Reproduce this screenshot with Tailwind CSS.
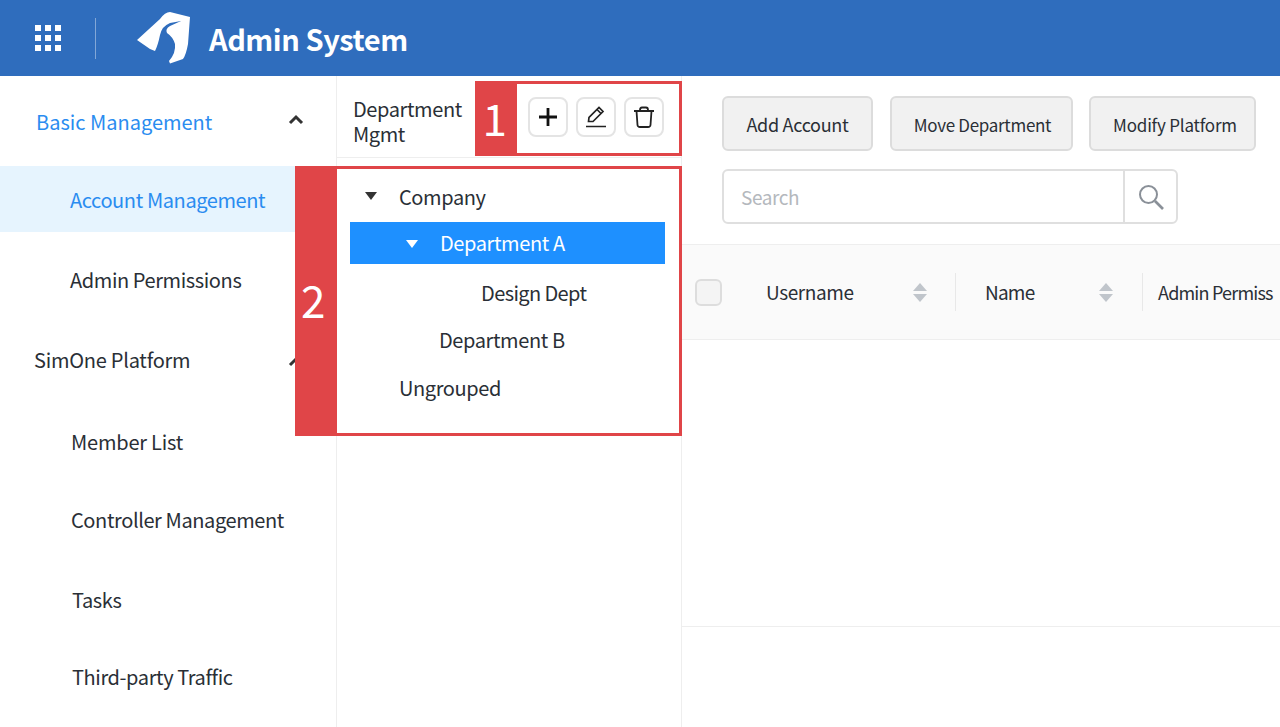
<!DOCTYPE html>
<html lang="en">
<head>
    <meta charset="UTF-8">
    <title>Admin System</title>
    <script src="https://cdn.jsdelivr.net/npm/@tailwindcss/browser@4"></script>
</head>
<body class="h-[727px] overflow-hidden bg-white font-['Noto_Sans_CJK_SC','Noto_Sans',sans-serif] text-[20px] tracking-[-0.4px] text-[#2a2f36]">
    <header class="flex h-[76px] items-center bg-[#2f6dbd]">
        <div class="ml-[35px] grid w-[26px] grid-cols-3 gap-[4px]">
            <i class="size-[6px] bg-white"></i><i class="size-[6px] bg-white"></i><i class="size-[6px] bg-white"></i>
            <i class="size-[6px] bg-white"></i><i class="size-[6px] bg-white"></i><i class="size-[6px] bg-white"></i>
            <i class="size-[6px] bg-white"></i><i class="size-[6px] bg-white"></i><i class="size-[6px] bg-white"></i>
        </div>
        <div class="ml-[34px] h-[41px] w-px bg-white/40"></div>
        <svg class="ml-[40px] shrink-0" width="56" height="54" viewBox="136 12 56 54">
            <path fill="#fff" d="M137 41 L160 20 Q165 13 170 13 L190 18 L188 45 Q186 56 183 60 L170 64.500 L169 62 Q176 54 175 45 Q173 38 167 34 Q165 30 170 27 L181 22 L170 24 Q162 27 160 36 Q158 46 155 52 L150 50 Z"/>
        </svg>
        <h1 class="ml-[17px] text-[29px] font-bold leading-none tracking-[-0.45px] text-white">Admin System</h1>
    </header>

    <div class="flex h-[651px]">
        <!-- sidebar -->
        <nav class="w-[337px] shrink-0 border-r border-[#eeeeee]">
            <div class="flex h-[90px] items-center justify-between pl-[36px] pr-[32px] pt-[1px] tracking-normal text-[#2a8cf0]">
                <span>Basic Management</span>
                <svg class="mb-[4px]" width="16" height="11" viewBox="0 0 16 11"><path d="M2 9 L8 3 L14 9" fill="none" stroke="#333" stroke-width="3"/></svg>
            </div>
            <div class="flex h-[66px] items-center bg-[#e6f4fe] pl-[70px] pt-[2px] text-[#2a8cf0]">Account Management</div>
            <div class="mt-[15px] flex h-[66px] items-center pl-[70px]">Admin Permissions</div>
            <div class="mt-[14px] flex h-[66px] items-center justify-between pl-[34px] pr-[32px] tracking-[-0.25px]">
                <span>SimOne Platform</span>
                <svg class="mt-[3px]" width="16" height="11" viewBox="0 0 16 11"><path d="M2 9 L8 3 L14 9" fill="none" stroke="#333" stroke-width="3"/></svg>
            </div>
            <div class="mt-[16px] flex h-[66px] items-center pl-[71px] tracking-[-0.2px]">Member List</div>
            <div class="mt-[12px] flex h-[66px] items-center pl-[71px]">Controller Management</div>
            <div class="mt-[14px] flex h-[66px] items-center pl-[72px]">Tasks</div>
            <div class="mt-[11px] flex h-[66px] items-center pl-[72px]">Third-party Traffic</div>
        </nav>

        <!-- department tree -->
        <section class="w-[345px] shrink-0 border-r border-[#eeeeee]">
            <div class="flex h-[82px] items-center justify-between border-b border-[#eeeeee] pl-[16px] pr-[17px] pt-[8px]">
                <div class="leading-[25px]">Department<br>Mgmt</div>
                <div class="-mt-[8px] flex gap-2">
                    <button class="flex size-10 items-center justify-center rounded-lg border-2 border-[#e4e4e4]">
                        <svg width="20" height="20" viewBox="0 0 20 20"><path d="M10 1 V19 M1 10 H19" stroke="#111" stroke-width="2.800"/></svg>
                    </button>
                    <button class="flex size-10 items-center justify-center rounded-lg border-2 border-[#e4e4e4]">
                        <svg width="24" height="24" viewBox="0 0 24 24"><path d="M4.500 16.500 L5 12.500 L15 2.500 L19 6.500 L9 16.500 Z M13 4.500 L17 8.500 M2 21.500 H22" fill="none" stroke="#222" stroke-width="1.700"/></svg>
                    </button>
                    <button class="flex size-10 items-center justify-center rounded-lg border-2 border-[#e4e4e4]">
                        <svg width="24" height="24" viewBox="0 0 24 24"><path d="M2 6 H22 M8 5 Q8 2.500 10 2.500 H14 Q16 2.500 16 5 M4.500 6 L5.500 20 Q5.700 22 8 22 H16 Q18.300 22 18.500 20 L19.500 6" fill="none" stroke="#222" stroke-width="1.800" stroke-linejoin="round"/></svg>
                    </button>
                </div>
            </div>
            <div class="relative">
                <div class="flex h-[40px] items-center pl-[62px] pt-[37px]">Company</div>
                <div class="ml-[13px] mt-[24px] flex h-[42px] w-[315px] items-center bg-[#1e90ff] pl-[90px] text-white">Department A</div>
                <div class="mt-[9px] flex h-[40px] items-center pl-[144px] tracking-[-0.6px]">Design Dept</div>
                <div class="mt-[7px] flex h-[40px] items-center pl-[102px]">Department B</div>
                <div class="mt-[8px] flex h-[40px] items-center pl-[62px]">Ungrouped</div>
                <i class="absolute left-[28px] top-[34px] border-x-[6px] border-t-[8px] border-x-transparent border-t-[#333]"></i>
                <i class="absolute left-[69px] top-[82px] border-x-[6px] border-t-[8px] border-x-transparent border-t-white"></i>
            </div>
        </section>

        <!-- account list -->
        <main class="min-w-0 flex-1">
            <div class="flex gap-[17px] pl-[40px] pt-[20px] text-[17px] tracking-[-0.2px]">
                <button class="h-[55px] w-[151px] rounded-md border-2 border-[#dcdcdc] bg-[#f1f1f1] pt-[2px] text-[18px] tracking-[-0.3px]">Add Account</button>
                <button class="h-[55px] w-[183px] rounded-md border-2 border-[#dcdcdc] bg-[#f1f1f1] pl-[2px] pt-[2px] tracking-[-0.3px]">Move Department</button>
                <button class="-ml-px h-[55px] w-[167px] rounded-md border-2 border-[#dcdcdc] bg-[#f1f1f1] pl-[5px] pt-[2px]">Modify Platform</button>
            </div>
            <div class="ml-[40px] mt-[18px] flex h-[55px] w-[456px] items-center rounded-md border-2 border-[#dfdfdf]">
                <span class="flex-1 pl-[17px] pt-[1px] text-[19px] text-[#b4b8bd]">Search</span>
                <span class="flex h-full w-[53px] items-center justify-center border-l-2 border-[#dfdfdf]">
                    <svg width="28" height="28" viewBox="0 0 28 28"><circle cx="11.500" cy="11.500" r="8.500" fill="none" stroke="#8a9098" stroke-width="2"/><path d="M18 18 L26 26" stroke="#8a9098" stroke-width="2.600"/></svg>
                </span>
            </div>
            <div class="mt-[20px] flex h-[96px] items-center overflow-hidden border-y border-[#eeeeee] bg-[#fafafa] whitespace-nowrap">
                <i class="ml-[13px] size-[27px] shrink-0 rounded-md border-2 border-[#dddddd] bg-[#f4f4f4]"></i>
                <span class="ml-[44px] w-[147px] text-[19px]">Username</span>
                <span class="flex flex-col gap-[3px]"><i class="border-x-[7px] border-b-[8px] border-x-transparent border-b-[#c0c5cb]"></i><i class="border-x-[7px] border-t-[8px] border-x-transparent border-t-[#c0c5cb]"></i></span>
                <i class="ml-[28px] h-[38px] w-px bg-[#e8e8e8]"></i>
                <span class="ml-[29px] w-[114px] text-[19px] tracking-[-0.8px]">Name</span>
                <span class="flex flex-col gap-[3px]"><i class="border-x-[7px] border-b-[8px] border-x-transparent border-b-[#c0c5cb]"></i><i class="border-x-[7px] border-t-[8px] border-x-transparent border-t-[#c0c5cb]"></i></span>
                <i class="ml-[29px] h-[38px] w-px bg-[#e8e8e8]"></i>
                <span class="ml-[15px] text-[18px] tracking-[-0.8px]">Admin Permiss</span>
            </div>
            <div class="h-[287px] border-b border-[#eeeeee]"></div>
        </main>
    </div>

    <!-- callouts over the page -->
    <div class="pointer-events-none absolute left-[475px] top-[81px] flex h-[75px] w-[207px] items-center border-[3px] border-[#e04548]">
        <span class="flex h-full w-[39px] items-center justify-center bg-[#e04548] pb-[4px] pr-[6px] text-[44px] leading-none text-white">1</span>
    </div>
    <div class="pointer-events-none absolute left-[295px] top-[166px] flex h-[270px] w-[387px] items-center border-[3px] border-[#e04548]">
        <span class="flex h-full w-[39px] items-center justify-center bg-[#e04548] pb-[5px] pr-[9px] text-[44px] leading-none text-white">2</span>
    </div>
</body>
</html>
